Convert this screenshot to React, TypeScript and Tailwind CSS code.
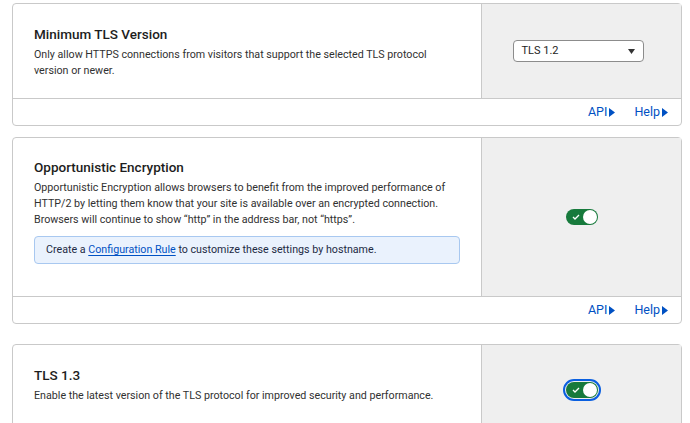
import React from "react";

const FONT = { fontFamily: "Roboto, 'Liberation Sans', sans-serif" };

function Caret() {
  return (
    <svg width="6" height="9" viewBox="0 0 6 9" className="ml-[2px] inline-block">
      <path d="M0 0 L6 4.5 L0 9 Z" fill="#0051c3" />
    </svg>
  );
}

function Footer() {
  return (
    <div className="flex h-[27px] items-center justify-end gap-[19px] border-t border-[#c9c9c9] pr-[13px] text-[12.5px] text-[#0051c3]">
      <span className="flex items-center">API<Caret /></span>
      <span className="flex items-center">Help<Caret /></span>
    </div>
  );
}

function Toggle({ focused }: { focused?: boolean }) {
  const sw = (
    <div className="flex h-[16px] w-[32px] items-center rounded-full bg-[#177a3c] pl-[6px] pr-[1px]">
      <svg width="8" height="6" viewBox="0 0 8 6">
        <path d="M1 3 L3 5 L7 1" stroke="white" strokeWidth="1.3" fill="none" />
      </svg>
      <div className="ml-auto h-[14px] w-[14px] rounded-full bg-white" />
    </div>
  );
  if (!focused) return sw;
  return <div className="rounded-full border-2 border-[#0a5fe0] p-[1px]">{sw}</div>;
}

function Card({
  title,
  children,
  control,
  footer = true,
  bodyClass,
}: {
  title: string;
  children: React.ReactNode;
  control: React.ReactNode;
  footer?: boolean;
  bodyClass: string;
}) {
  return (
    <div className="rounded-[4px] border border-[#c9c9c9] bg-white">
      <div className="flex">
        <div className={`flex-1 whitespace-nowrap pl-[21px] pr-[20px] ${bodyClass}`}>
          <h2 className="text-[13.5px] font-medium leading-[18px] text-[#1d1d1d]">{title}</h2>
          <div className="mt-[4px] text-[10.7px] leading-[16px] text-[#313131]">{children}</div>
        </div>
        <div className="flex w-[200px] items-center justify-center border-l border-[#c9c9c9] bg-[#efefef]">
          {control}
        </div>
      </div>
      {footer && <Footer />}
    </div>
  );
}

export default function App() {
  return (
    <div className="h-[423px] overflow-hidden bg-white pl-[12px] pr-[8px] pt-[3px]" style={FONT}>
      <Card
        title="Minimum TLS Version"
        bodyClass="h-[94px] pt-[21px]"
        control={
          <div className="ml-[-7px] flex h-[22px] w-[131px] items-center justify-between rounded-[4px] border border-[#8c8c8c] bg-white pl-[8px] pr-[8px] text-[11px] text-[#1d1d1d]">
            <span>TLS 1.2</span>
            <svg width="7" height="5" viewBox="0 0 7 5">
              <path d="M0 0 H7 L3.5 5 Z" fill="#333" />
            </svg>
          </div>
        }
      >
        Only allow HTTPS connections from visitors that support the selected TLS protocol
        <br />
        version or newer.
      </Card>

      <div className="mt-[11px]">
        <Card
          title="Opportunistic Encryption"
          bodyClass="h-[158px] pt-[20px]"
          control={<Toggle />}
        >
          Opportunistic Encryption allows browsers to benefit from the improved performance of
          <br />
          HTTP/2 by letting them know that your site is available over an encrypted connection.
          <br />
          Browsers will continue to show “http” in the address bar, not “https”.
          <div className="mt-[8px] flex h-[28px] w-[426px] items-center rounded-[4px] border border-[#a8c8f0] bg-[#eaf2fd] pl-[11px] text-[#1d2a44]">
            Create a&nbsp;
            <span className="text-[#0051c3] underline underline-offset-2">Configuration Rule</span>
            &nbsp;to customize these settings by hostname.
          </div>
        </Card>
      </div>

      <div className="mt-[20px]">
        <Card
          title="TLS 1.3"
          bodyClass="h-[95px] pt-[21px]"
          footer={false}
          control={<div className="mb-[6px]"><Toggle focused /></div>}
        >
          Enable the latest version of the TLS protocol for improved security and performance.
        </Card>
      </div>
    </div>
  );
}
